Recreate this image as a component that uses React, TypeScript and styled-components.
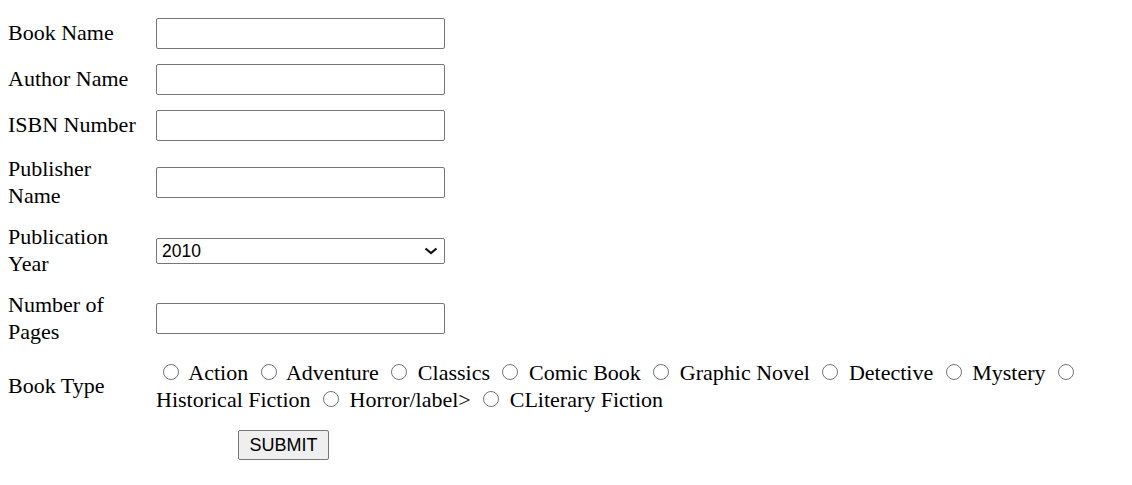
import React, { Fragment } from "react";
import styled, { createGlobalStyle } from "styled-components";

const Global = createGlobalStyle`
  html, body { margin: 0; padding: 0; background: #ffffff; }
  body { color: #000; font-family: "Liberation Serif", "Times New Roman", serif; }
`;

const Form = styled.form`
  padding: 10.5px 8px 0 8px;
  font-family: "Liberation Serif", "Times New Roman", serif;
  font-size: 22px;
  line-height: 26.5px;
`;

const Row = styled.div<{ $top?: number }>`
  display: grid;
  grid-template-columns: 132px 1fr;
  column-gap: 16px;
  align-items: center;
  padding: 7.5px 0;
  margin-top: ${(p) => p.$top ?? 0}px;
`;

const Label = styled.label`
  display: block;
`;

const TextInput = styled.input`
  box-sizing: border-box;
  width: 289px;
  height: 31px;
  border: 1px solid #767676;
  border-radius: 2px;
  background: #fff;
  padding: 1px 3px;
  font-family: "Liberation Sans", Arial, sans-serif;
  font-size: 17px;
  display: block;
`;

const SelectWrap = styled.div`
  position: relative;
  width: 289px;
  height: 26px;
`;

const Select = styled.select`
  appearance: none;
  -webkit-appearance: none;
  box-sizing: border-box;
  width: 289px;
  height: 26px;
  border: 1px solid #767676;
  border-radius: 2px;
  background: #fff;
  color: #000;
  padding: 0 0 0 5px;
  font-family: "Liberation Sans", Arial, sans-serif;
  font-size: 17.5px;
  display: block;
`;

const Chevron = styled.svg`
  position: absolute;
  right: 7px;
  top: 9px;
  width: 14px;
  height: 8px;
  pointer-events: none;
`;

const Options = styled.div`
  line-height: 26.5px;
`;

const Radio = styled.input`
  width: 16px;
  height: 16px;
  margin: 0 5px 0 7px;
  vertical-align: baseline;
  accent-color: #767676;
`;

const SubmitCell = styled.div`
  grid-column: 2;
  padding-left: 82px;
`;

const SubmitButton = styled.button`
  box-sizing: border-box;
  height: 30px;
  width: 91px;
  padding: 0;
  border: 1px solid #767676;
  border-radius: 2px;
  background: #efefef;
  color: #000;
  font-family: "Liberation Sans", Arial, sans-serif;
  font-size: 18px;
  display: block;
`;

const types = [
  "Action",
  "Adventure",
  "Classics",
  "Comic Book",
  "Graphic Novel",
  "Detective",
  "Mystery",
  "Historical Fiction",
  "Horror/label>",
  "CLiterary Fiction",
];

const years = ["2010", "2011", "2012", "2013", "2014", "2015"];

export default function App() {
  return (
    <>
      <Global />
      <Form onSubmit={(e) => e.preventDefault()}>
        <Row>
          <Label htmlFor="book">Book Name</Label>
          <TextInput id="book" type="text" />
        </Row>
        <Row>
          <Label htmlFor="author">Author Name</Label>
          <TextInput id="author" type="text" />
        </Row>
        <Row>
          <Label htmlFor="isbn">ISBN Number</Label>
          <TextInput id="isbn" type="text" />
        </Row>
        <Row>
          <Label htmlFor="publisher">Publisher Name</Label>
          <TextInput id="publisher" type="text" />
        </Row>
        <Row>
          <Label htmlFor="year">Publication Year</Label>
          <SelectWrap>
            <Select id="year" defaultValue="2010">
              {years.map((y) => (
                <option key={y} value={y}>
                  {y}
                </option>
              ))}
            </Select>
            <Chevron viewBox="0 0 14 8">
              <path d="M1.5 1.5 L7 6 L12.5 1.5" fill="none" stroke="#111" strokeWidth="2.2" />
            </Chevron>
          </SelectWrap>
        </Row>
        <Row>
          <Label htmlFor="pages">Number of Pages</Label>
          <TextInput id="pages" type="text" />
        </Row>
        <Row>
          <Label>Book Type</Label>
          <Options>
            {types.map((t) => (
              <Fragment key={t}>
                <Radio type="radio" name="type" value={t} /> {t}{" "}
              </Fragment>
            ))}
          </Options>
        </Row>
        <Row $top={2}>
          <SubmitCell>
            <SubmitButton type="submit">SUBMIT</SubmitButton>
          </SubmitCell>
        </Row>
      </Form>
    </>
  );
}
